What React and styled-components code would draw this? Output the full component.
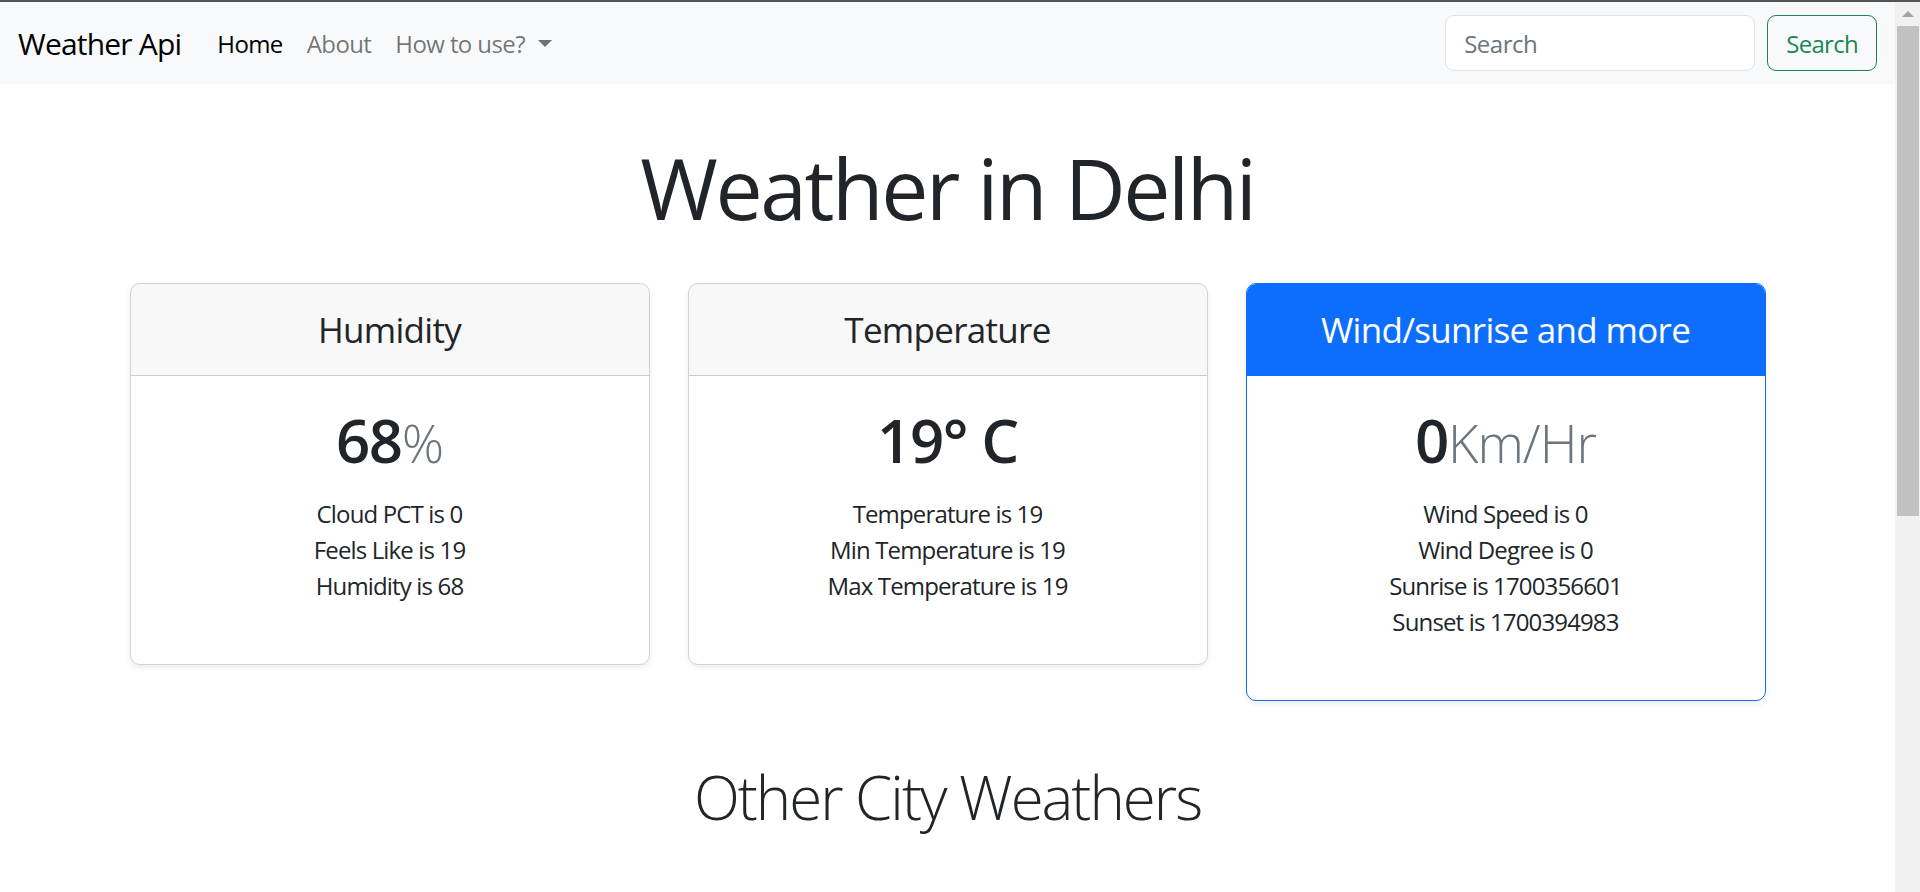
import React from "react"
import styled, { createGlobalStyle } from "styled-components"

const GlobalStyle = createGlobalStyle`
  html, body {
    margin: 0;
    padding: 0;
    height: 100%;
    overflow: hidden;
    background: #fff;
  }
  body {
    font-family: "Open Sans", "Noto Sans", sans-serif;
    color: #212529;
  }
  * {
    box-sizing: border-box;
  }
`

const Shell = styled.div`
  display: flex;
  height: 100vh;
  border-top: 2px solid #555;
`

const Main = styled.div`
  flex: 1;
  min-width: 0;
  overflow: hidden;
`

const Scrollbar = styled.div`
  width: 25px;
  flex-shrink: 0;
  background: #f1f1f1;
  display: flex;
  flex-direction: column;
  align-items: stretch;
`

const ScrollArrow = styled.div`
  height: 24px;
  display: flex;
  align-items: center;
  justify-content: center;

  &::before {
    content: "";
    border-left: 6px solid transparent;
    border-right: 6px solid transparent;
    border-bottom: 6px solid #a3a3a3;
  }
`

const ScrollThumb = styled.div`
  height: 490px;
  margin: 0 1px 0 2px;
  background: #c1c1c1;
`

const Navbar = styled.nav`
  height: 82px;
  background: #f8f9fa;
  display: flex;
  align-items: center;
  padding: 0 18px;
`

const Brand = styled.a`
  font-size: 30px;
  color: #000;
  margin-right: 24px;
  text-decoration: none;
  letter-spacing: -0.8px;
`

const NavList = styled.ul`
  display: flex;
  list-style: none;
  margin: 0;
  padding: 0;
  flex: 1;
`

const NavLink = styled.a`
  display: inline-flex;
  align-items: center;
  font-size: 24px;
  padding: 12px;
  text-decoration: none;
  letter-spacing: -0.6px;
  color: ${(p) => (p.$active ? "#000" : "rgba(0, 0, 0, 0.55)")};

  ${(p) =>
    p.$dropdown &&
    `
    &::after {
      content: "";
      margin-left: 13px;
      border-top: 7px solid currentColor;
      border-left: 7px solid transparent;
      border-right: 7px solid transparent;
    }
  `}
`

const SearchForm = styled.form`
  display: flex;
  gap: 12px;
`

const SearchInput = styled.input`
  width: 310px;
  height: 56px;
  padding: 9px 18px;
  font-family: inherit;
  font-size: 24px;
  letter-spacing: -0.5px;
  color: #212529;
  background: #fff;
  border: 1.5px solid #dee2e6;
  border-radius: 9px;
  outline: none;

  &::placeholder {
    color: #6c757d;
  }
`

const SearchButton = styled.button`
  height: 56px;
  padding: 9px 18px;
  font-family: inherit;
  font-size: 24px;
  letter-spacing: -0.7px;
  color: #198754;
  background: transparent;
  border: 1.5px solid #198754;
  border-radius: 9px;
`

const Title = styled.h1`
  margin: 54px 0 44px;
  text-align: center;
  font-size: 84px;
  font-weight: 400;
  line-height: 1.2;
  letter-spacing: -2.4px;
`

const CardRow = styled.div`
  display: flex;
  justify-content: center;
  align-items: flex-start;
  gap: 38px;
`

const Card = styled.div`
  width: 520px;
  border: 1.5px solid ${(p) => (p.$primary ? "#0d6efd" : "rgba(0, 0, 0, 0.175)")};
  border-radius: 10px;
  box-shadow: 0 3px 6px rgba(0, 0, 0, 0.075);
  overflow: hidden;
  text-align: center;
`

const CardHeader = styled.div`
  padding: 24px;
  background: ${(p) => (p.$primary ? "#0d6efd" : "rgba(33, 37, 41, 0.03)")};
  color: ${(p) => (p.$primary ? "#fff" : "#212529")};
  border-bottom: 1.5px solid ${(p) => (p.$primary ? "#0d6efd" : "rgba(0, 0, 0, 0.175)")};
`

const CardTitle = styled.h4`
  margin: 0;
  font-size: 35px;
  font-weight: 400;
  line-height: 43px;
  letter-spacing: -0.7px;
`

const CardBody = styled.div`
  padding: 28px 24px 24px;
`

const BigValue = styled.h1`
  margin: 0 0 12px;
  font-size: 60px;
  font-weight: 600;
  line-height: 1.2;
  letter-spacing: -1.4px;
`

const Unit = styled.small`
  font-size: 0.875em;
  font-weight: 300;
  letter-spacing: -1px;
  color: #6c757d;
`

const InfoList = styled.ul`
  list-style: none;
  margin: 20px 0 36px;
  padding: 0;
  font-size: 24px;
  line-height: 36px;
  letter-spacing: -0.85px;
`

const SubTitle = styled.h2`
  margin: 60px 0 0;
  text-align: center;
  font-size: 60px;
  font-weight: 300;
  line-height: 1.2;
  letter-spacing: -2px;
`

const cards = [
  {
    title: "Humidity",
    value: "68",
    unit: "%",
    lines: ["Cloud PCT is 0", "Feels Like is 19", "Humidity is 68"],
  },
  {
    title: "Temperature",
    value: "19° C",
    unit: "",
    lines: ["Temperature is 19", "Min Temperature is 19", "Max Temperature is 19"],
  },
  {
    title: "Wind/sunrise and more",
    value: "0",
    unit: "Km/Hr",
    primary: true,
    lines: [
      "Wind Speed is 0",
      "Wind Degree is 0",
      "Sunrise is 1700356601",
      "Sunset is 1700394983",
    ],
  },
]

export default function App() {
  return (
    <>
      <GlobalStyle />
      <Shell>
        <Main>
          <Navbar>
            <Brand href="#">Weather Api</Brand>
            <NavList>
              <li>
                <NavLink href="#" $active>
                  Home
                </NavLink>
              </li>
              <li>
                <NavLink href="#">About</NavLink>
              </li>
              <li>
                <NavLink href="#" $dropdown>
                  How to use?
                </NavLink>
              </li>
            </NavList>
            <SearchForm onSubmit={(e) => e.preventDefault()}>
              <SearchInput type="search" placeholder="Search" />
              <SearchButton type="submit">Search</SearchButton>
            </SearchForm>
          </Navbar>

          <Title>Weather in Delhi</Title>

          <CardRow>
            {cards.map((c) => (
              <Card key={c.title} $primary={c.primary}>
                <CardHeader $primary={c.primary}>
                  <CardTitle>{c.title}</CardTitle>
                </CardHeader>
                <CardBody>
                  <BigValue>
                    {c.value}
                    {c.unit && <Unit>{c.unit}</Unit>}
                  </BigValue>
                  <InfoList>
                    {c.lines.map((l) => (
                      <li key={l}>{l}</li>
                    ))}
                  </InfoList>
                </CardBody>
              </Card>
            ))}
          </CardRow>

          <SubTitle>Other City Weathers</SubTitle>
        </Main>
        <Scrollbar>
          <ScrollArrow />
          <ScrollThumb />
        </Scrollbar>
      </Shell>
    </>
  )
}
